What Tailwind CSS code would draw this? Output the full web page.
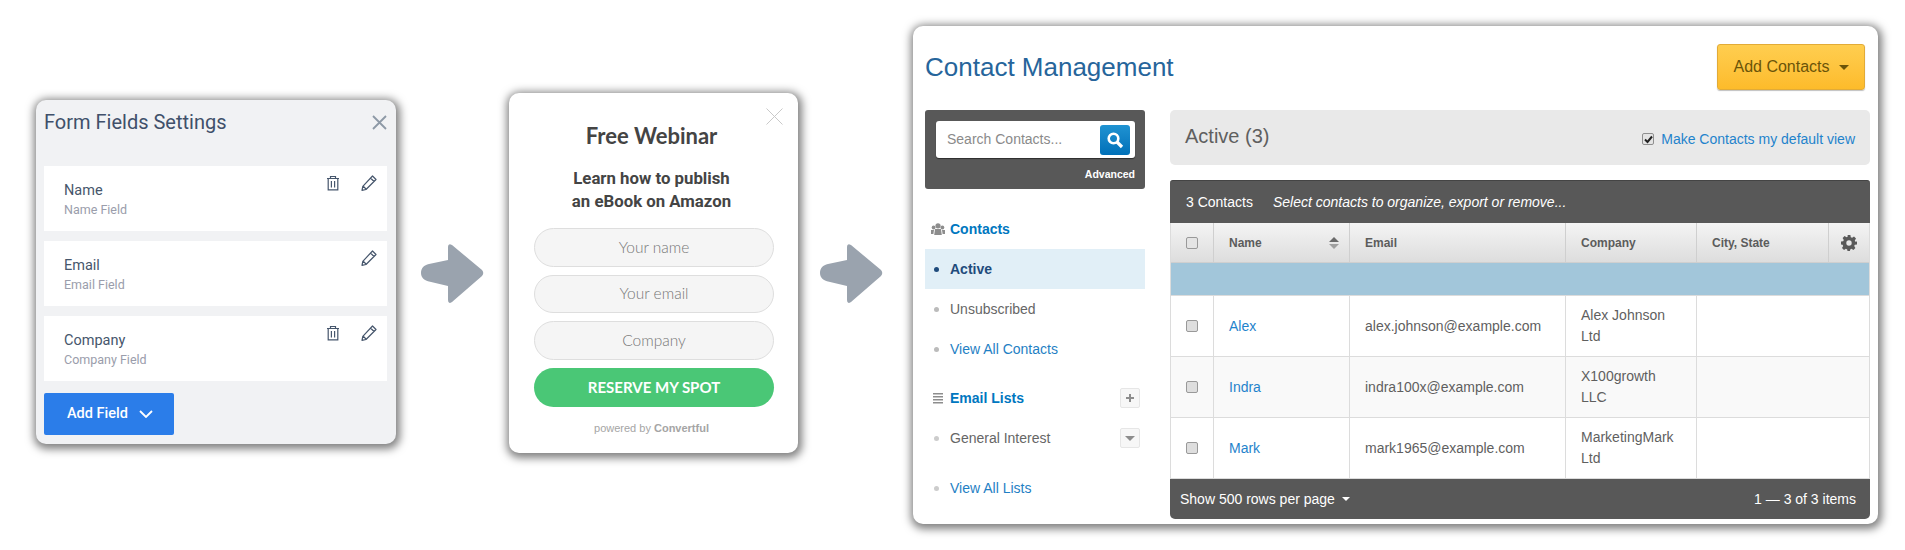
<!DOCTYPE html>
<html>
<head>
<meta charset="utf-8">
<script src="https://cdn.jsdelivr.net/npm/@tailwindcss/browser@4"></script>
</head>
<body class="bg-white">
<div class="flex items-start w-[1905px] h-[550px] overflow-hidden pl-[36px] font-['Liberation_Sans',sans-serif]">

  <!-- Form fields card -->
  <div class="mt-[100px] w-[360px] h-[344px] shrink-0 rounded-[10px] bg-[#f1f2f4] shadow-[1px_2px_8px_3px_rgba(0,0,0,0.5)] pl-2 pr-[9px] font-['Roboto',sans-serif]">
    <div class="flex items-center justify-between h-[66px] pb-[22px]">
      <span class="text-[20px] text-[#40506a] leading-none">Form Fields Settings</span>
      <svg class="w-[15px] h-[15px]" viewBox="0 0 15 15" fill="none" stroke="#8d99a6" stroke-width="1.8"><path d="M1 1l13 13M14 1L1 14"/></svg>
    </div>
    <div class="flex flex-col gap-[10px]">
      <div class="relative h-[65px] bg-white pl-[20px] pt-[15px]">
        <div class="text-[14.5px] leading-[20px] text-[#46566c]">Name</div>
        <div class="text-[12.5px] leading-[18px] text-[#9a9dab]">Name Field</div>
        <div class="absolute right-[10px] top-[9px] flex items-center gap-[21px]">
          <svg class="w-[14px] h-[16px]" viewBox="0 0 14 16" fill="none" stroke="#46566c" stroke-width="1.2"><path d="M1 3.500h12M4.500 3.500V1.500h5v2M2.200 3.500v11.300h9.600V3.500M5.400 6v6.500M8.600 6v6.500"/></svg>
          <svg class="w-[16px] h-[16px]" viewBox="0 0 16 16" fill="none" stroke="#46566c" stroke-width="1.2" stroke-linejoin="round"><path d="M11.500 1L15 4.500 5 14.500l-4 .8.8-4zM9.500 3l3.500 3.500M2 11l3 3"/></svg>
        </div>
      </div>
      <div class="relative h-[65px] bg-white pl-[20px] pt-[15px]">
        <div class="text-[14.5px] leading-[20px] text-[#46566c]">Email</div>
        <div class="text-[12.5px] leading-[18px] text-[#9a9dab]">Email Field</div>
        <div class="absolute right-[10px] top-[9px] flex items-center gap-[21px]">
          <svg class="w-[16px] h-[16px]" viewBox="0 0 16 16" fill="none" stroke="#46566c" stroke-width="1.2" stroke-linejoin="round"><path d="M11.500 1L15 4.500 5 14.500l-4 .8.8-4zM9.500 3l3.500 3.500M2 11l3 3"/></svg>
        </div>
      </div>
      <div class="relative h-[65px] bg-white pl-[20px] pt-[15px]">
        <div class="text-[14.5px] leading-[20px] text-[#46566c]">Company</div>
        <div class="text-[12.5px] leading-[18px] text-[#9a9dab]">Company Field</div>
        <div class="absolute right-[10px] top-[9px] flex items-center gap-[21px]">
          <svg class="w-[14px] h-[16px]" viewBox="0 0 14 16" fill="none" stroke="#46566c" stroke-width="1.2"><path d="M1 3.500h12M4.500 3.500V1.500h5v2M2.200 3.500v11.300h9.600V3.500M5.400 6v6.500M8.600 6v6.500"/></svg>
          <svg class="w-[16px] h-[16px]" viewBox="0 0 16 16" fill="none" stroke="#46566c" stroke-width="1.2" stroke-linejoin="round"><path d="M11.500 1L15 4.500 5 14.500l-4 .8.8-4zM9.500 3l3.500 3.500M2 11l3 3"/></svg>
        </div>
      </div>
    </div>
    <div class="mt-[12px] flex items-center w-[130px] h-[42px] rounded-[2px] bg-[#2b7de9] pl-[23px] text-white text-[14.5px] font-medium">
      Add Field
      <svg class="ml-[11px] w-[14px] h-[8px]" viewBox="0 0 14 8" fill="none" stroke="#fff" stroke-width="1.8"><path d="M1 1l6 6 6-6"/></svg>
    </div>
  </div>

  <!-- arrow 1 -->
  <svg class="mt-[244px] ml-[25px] w-[64px] h-[60px] shrink-0" viewBox="0 0 64 60" fill="#9aa3ae"><path d="M0 29C0 24 3 21 8 20L27 16L27 3Q27 -1 31 1L61 26Q63.500 29 61 32L31 58Q27 60.500 27 56L27 42L8 37.500C3 36.500 0 33 0 29Z"/></svg>

  <!-- webinar card -->
  <div class="mt-[93px] ml-[24px] w-[289px] h-[360px] shrink-0 rounded-[10px] bg-white shadow-[1px_2px_8px_3px_rgba(0,0,0,0.5)] pl-[25px] pr-[24px] font-['Lato',sans-serif]">
    <div class="relative">
      <svg class="absolute right-[-9px] top-[15px] w-[17px] h-[17px]" viewBox="0 0 17 17" fill="none" stroke="#c9c9c9" stroke-width="1"><path d="M.5.500l16 16M16.500.500l-16 16"/></svg>
    </div>
    <div class="pt-[29px] pr-[5px] text-center text-[22px] leading-[28px] font-bold text-[#444]">Free Webinar</div>
    <div class="mt-[17px] pr-[5px] text-center font-['Roboto',sans-serif] font-bold text-[16.8px] leading-[23px] text-[#444]">Learn how to publish<br>an eBook on Amazon</div>
    <div class="mt-[15px] flex flex-col gap-[8px]">
      <div class="flex items-center justify-center h-[38.5px] rounded-full border border-[#dedede] bg-[#f5f5f5] text-[15.500px] font-light text-[#777]">Your name</div>
      <div class="flex items-center justify-center h-[38.5px] rounded-full border border-[#dedede] bg-[#f5f5f5] text-[15.500px] font-light text-[#777]">Your email</div>
      <div class="flex items-center justify-center h-[38.5px] rounded-full border border-[#dedede] bg-[#f5f5f5] text-[15.500px] font-light text-[#777]">Company</div>
      <div class="flex items-center justify-center h-[39px] rounded-full bg-[#4ac776] text-[15px] font-bold text-white">RESERVE MY SPOT</div>
    </div>
    <div class="mt-[14px] pr-[5px] text-center font-['Liberation_Sans',sans-serif] text-[11px] leading-[14px] text-[#a5a5a5]">powered by <b>Convertful</b></div>
  </div>

  <!-- arrow 2 -->
  <svg class="mt-[244px] ml-[22px] w-[64px] h-[60px] shrink-0" viewBox="0 0 64 60" fill="#9aa3ae"><path d="M0 29C0 24 3 21 8 20L27 16L27 3Q27 -1 31 1L61 26Q63.500 29 61 32L31 58Q27 60.500 27 56L27 42L8 37.500C3 36.500 0 33 0 29Z"/></svg>

  <!-- contact management card -->
  <div class="mt-[26px] ml-[29px] w-[965px] h-[498px] shrink-0 rounded-[10px] bg-white shadow-[1px_2px_8px_3px_rgba(0,0,0,0.5)] pl-[12px] pr-[8px] pt-[18px]">
    <div class="flex items-center justify-between h-[46px]">
      <h1 class="text-[26px] text-[#26659b] leading-none">Contact Management</h1>
      <div class="mr-[5px] flex items-center justify-center gap-[9px] w-[148px] h-[46px] rounded-[3px] border border-[#e2ab37] bg-linear-to-b from-[#ffce4f] to-[#fdbb2a] shadow-[0_1px_1px_rgba(0,0,0,0.25)] text-[16px] text-[#6b5409]">
        Add Contacts
        <span class="w-0 h-0 border-x-[5px] border-x-transparent border-t-[5px] border-t-[#6b5409]"></span>
      </div>
    </div>

    <div class="mt-[20px] flex gap-[25px]">
      <!-- sidebar -->
      <div class="w-[220px] shrink-0">
        <div class="h-[79px] rounded-[3px] bg-[#585858] pt-[11px] pl-[11px] pr-[10px]">
          <div class="flex items-center justify-between h-[37px] rounded-[3px] bg-white pl-[11px] pr-[5px] shadow-[0_1px_1px_rgba(0,0,0,0.5)]">
            <span class="text-[14px] text-[#8a8a8a]">Search Contacts...</span>
            <span class="flex items-center justify-center w-[30px] h-[30px] rounded-[3px] bg-linear-to-b from-[#1f93d2] to-[#0070b8]">
              <svg class="w-[18px] h-[18px]" viewBox="0 0 18 18" fill="none" stroke="#fff"><circle cx="7.500" cy="7.500" r="4.800" stroke-width="2.600"/><path d="M11 11l5 5" stroke-width="3.200"/></svg>
            </span>
          </div>
          <div class="mt-[9px] text-right text-[10.5px] leading-[14px] font-bold text-white">Advanced</div>
        </div>

        <div class="mt-[20px] flex items-center h-[40px] pl-[6px] text-[14px] font-bold text-[#0077c0]">
          <svg class="mr-[5px] w-[14px] h-[12px]" viewBox="0 0 14 12" fill="#8d8d8d"><circle cx="7" cy="2.800" r="2.600"/><circle cx="2.600" cy="4.500" r="1.900"/><circle cx="11.400" cy="4.500" r="1.900"/><path d="M4 6h6l.8 6H3.200zM0 7h3l-.6 4H0zM11 7h3v4h-2.400z"/></svg>
          Contacts
        </div>
        <div class="flex items-center h-[40px] pl-[9px] bg-[#e1eff7] text-[14px] font-bold text-[#1f4b7c]">
          <span class="w-[5px] h-[5px] rounded-full bg-[#1f4b7c] mr-[11px]"></span>Active
        </div>
        <div class="flex items-center h-[40px] pl-[9px] text-[14px] text-[#666]">
          <span class="w-[5px] h-[5px] rounded-full bg-[#bbb] mr-[11px]"></span>Unsubscribed
        </div>
        <div class="flex items-center h-[40px] pl-[9px] text-[14px] text-[#1f7fc4]">
          <span class="w-[5px] h-[5px] rounded-full bg-[#bbb] mr-[11px]"></span>View All Contacts
        </div>

        <div class="mt-[9px] flex items-center h-[40px] pl-[8px] pr-[5px] text-[14px] font-bold text-[#0077c0]">
          <svg class="mr-[7px] w-[10px] h-[11px]" viewBox="0 0 10 11" fill="#8d8d8d"><path d="M0 0h10v1.500H0zM0 3h10v1.500H0zM0 6h10v1.500H0zM0 9h10v1.500H0z"/></svg>
          Email Lists
          <span class="ml-auto flex items-center justify-center w-[20px] h-[20px] rounded-[2px] border border-[#e6e6e6] bg-[#f7f7f7]">
            <svg class="w-[8px] h-[8px]" viewBox="0 0 8 8" fill="#8d8d8d"><path d="M3 0h2v3h3v2H5v3H3V5H0V3h3z"/></svg>
          </span>
        </div>
        <div class="flex items-center h-[40px] pl-[9px] pr-[5px] text-[14px] text-[#666]">
          <span class="w-[5px] h-[5px] rounded-full bg-[#ccc] mr-[11px]"></span>General Interest
          <span class="ml-auto flex items-center justify-center w-[20px] h-[20px] rounded-[2px] border border-[#e6e6e6] bg-[#f7f7f7]">
            <span class="w-0 h-0 border-x-[5px] border-x-transparent border-t-[5px] border-t-[#8d8d8d]"></span>
          </span>
        </div>
        <div class="mt-[10px] flex items-center h-[40px] pl-[9px] text-[14px] text-[#1f7fc4]">
          <span class="w-[5px] h-[5px] rounded-full bg-[#ccc] mr-[11px]"></span>View All Lists
        </div>
      </div>

      <!-- main -->
      <div class="w-[700px] shrink-0">
        <div class="flex items-center justify-between h-[55px] rounded-[5px] bg-[#e9e9e9] pl-[15px] pr-[15px]">
          <span class="text-[20px] text-[#5f5f5f] pb-[4px]">Active (3)</span>
          <span class="flex items-center text-[14px] text-[#1f83cc] pt-[3px]">
            <span class="relative mr-[7px] w-[12px] h-[12px] rounded-[2px] border border-[#8f8f8f] bg-[#e4e4e4]">
              <svg class="absolute left-[1px] top-[1px] w-[9px] h-[9px]" viewBox="0 0 9 9" fill="none" stroke="#222" stroke-width="2"><path d="M1 4.500l2.500 2.500L8 1.500"/></svg>
            </span>
            Make Contacts my default view
          </span>
        </div>

        <div class="mt-[15px] flex items-center h-[43px] rounded-t-[3px] border-t border-t-[#444] bg-[#585858] pl-[16px] text-[14px] text-white">
          <span>3 Contacts</span>
          <span class="ml-[20px] italic">Select contacts to organize, export or remove...</span>
        </div>

        <div class="border-x border-[#dcdcdc] text-[14px] text-[#5f5f5f]">
          <div class="grid grid-cols-[43px_136px_216px_131px_132px_40px] h-[40px] bg-linear-to-b from-[#f4f4f4] to-[#dddddd] border-b border-[#cfcfcf] text-[12px] font-bold text-[#5c5c5c]">
            <div class="flex items-center justify-center border-r border-[#cfcfcf]">
              <span class="w-[12px] h-[12px] rounded-[2px] border border-[#999] bg-[#e4e4e4]"></span>
            </div>
            <div class="flex items-center justify-between pl-[15px] pr-[10px] border-r border-[#cfcfcf]">Name
              <span class="flex flex-col gap-[2px]">
                <span class="w-0 h-0 border-x-[5px] border-x-transparent border-b-[5px] border-b-[#6a6a6a]"></span>
                <span class="w-0 h-0 border-x-[5px] border-x-transparent border-t-[5px] border-t-[#a0a0a0]"></span>
              </span>
            </div>
            <div class="flex items-center pl-[15px] border-r border-[#cfcfcf]">Email</div>
            <div class="flex items-center pl-[15px] border-r border-[#cfcfcf]">Company</div>
            <div class="flex items-center pl-[15px] border-r border-[#cfcfcf]">City, State</div>
            <div class="flex items-center justify-center">
              <svg class="w-[16px] h-[16px]" viewBox="0 0 16 16" fill="#5a5a5a"><path fill-rule="evenodd" d="M6.600 0h2.800l.4 2.200 1.300.6 1.900-1.200 2 2-1.200 1.900.6 1.300L16 6.600v2.800l-2.200.4-.6 1.300 1.200 1.900-2 2-1.900-1.200-1.300.6-.4 2.200H6.600l-.4-2.200-1.300-.6-1.900 1.200-2-2 1.200-1.900-.6-1.300L0 9.400V6.600l2.200-.4.600-1.300-1.200-1.900 2-2 1.900 1.200 1.300-.6zM8 5.300a2.700 2.700 0 1 0 0 5.400 2.700 2.700 0 0 0 0-5.400z"/></svg>
            </div>
          </div>
          <div class="h-[33px] bg-[#a2c6da] border-b border-[#dcdcdc]"></div>

          <div class="grid grid-cols-[43px_136px_216px_131px_172px] h-[61px] border-b border-[#dcdcdc] bg-white">
            <div class="flex items-center justify-center border-r border-[#dcdcdc]"><span class="w-[12px] h-[12px] rounded-[2px] border border-[#999] bg-[#dedede]"></span></div>
            <div class="flex items-center pl-[15px] border-r border-[#dcdcdc] text-[#1f83cc]">Alex</div>
            <div class="flex items-center pl-[15px] border-r border-[#dcdcdc]">alex.johnson@example.com</div>
            <div class="flex items-center pl-[15px] pr-[15px] border-r border-[#dcdcdc] leading-[21px]">Alex Johnson Ltd</div>
            <div></div>
          </div>
          <div class="grid grid-cols-[43px_136px_216px_131px_172px] h-[61px] border-b border-[#dcdcdc] bg-[#f9f9f9]">
            <div class="flex items-center justify-center border-r border-[#dcdcdc]"><span class="w-[12px] h-[12px] rounded-[2px] border border-[#999] bg-[#dedede]"></span></div>
            <div class="flex items-center pl-[15px] border-r border-[#dcdcdc] text-[#1f83cc]">Indra</div>
            <div class="flex items-center pl-[15px] border-r border-[#dcdcdc]">indra100x@example.com</div>
            <div class="flex items-center pl-[15px] pr-[15px] border-r border-[#dcdcdc] leading-[21px]">X100growth LLC</div>
            <div></div>
          </div>
          <div class="grid grid-cols-[43px_136px_216px_131px_172px] h-[61px] border-b border-[#dcdcdc] bg-white">
            <div class="flex items-center justify-center border-r border-[#dcdcdc]"><span class="w-[12px] h-[12px] rounded-[2px] border border-[#999] bg-[#dedede]"></span></div>
            <div class="flex items-center pl-[15px] border-r border-[#dcdcdc] text-[#1f83cc]">Mark</div>
            <div class="flex items-center pl-[15px] border-r border-[#dcdcdc]">mark1965@example.com</div>
            <div class="flex items-center pl-[15px] pr-[10px] border-r border-[#dcdcdc] leading-[21px]">MarketingMark Ltd</div>
            <div></div>
          </div>
        </div>

        <div class="flex items-center justify-between h-[40px] rounded-b-[5px] bg-[#585858] pl-[10px] pr-[14px] text-[14px] text-white">
          <span class="flex items-center gap-[7px]">Show 500 rows per page
            <span class="w-0 h-0 border-x-[4px] border-x-transparent border-t-[4px] border-t-white"></span>
          </span>
          <span>1 — 3 of 3 items</span>
        </div>
      </div>
    </div>
  </div>
</div>
</body>
</html>
